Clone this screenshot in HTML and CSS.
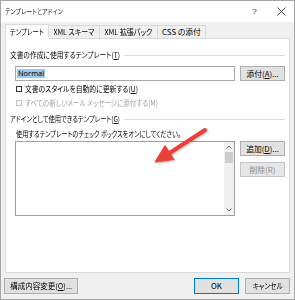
FILE: index.html
```html
<!DOCTYPE html>
<html lang="ja">
<head>
<meta charset="utf-8">
<title>テンプレートとアドイン</title>
<link rel="stylesheet" href="styles.css">
</head>
<body>
<div class="window">
  <div class="titlebar">
    <span class="title"><span class="sx s-title">テンプレートとアドイン</span></span>
    <span class="tb-btn help">?</span>
    <span class="tb-btn close">
      <svg width="9" height="9" viewBox="0 0 9 9"><path d="M0.5 0.5L8.5 8.5M8.5 0.5L0.5 8.5" stroke="#333" stroke-width="0.9" fill="none"/></svg>
    </span>
  </div>
  <div class="tabs">
    <div class="tab active t1"><span class="sx c s-tab1">テンプレート</span></div>
    <div class="tab t2"><span class="sx c s-tab2">XML スキーマ</span></div>
    <div class="tab t3"><span class="sx c s-tab3">XML 拡張パック</span></div>
    <div class="tab t4"><span class="sx c">CSS の添付</span></div>
  </div>
  <div class="panel">
    <div class="group-header"><span class="sx s-h1">文書の作成に使用するテンプレート(<u>T</u>)</span><span class="rule"></span></div>
    <div class="row input-row">
      <div class="textbox"><span class="sel">Normal</span></div>
      <button class="btn side">添付(<u>A</u>)...</button>
    </div>
    <div class="check"><span class="box"></span><span class="sx s-c1">文書のスタイルを自動的に更新する(<u>U</u>)</span></div>
    <div class="check disabled"><span class="box"></span><span class="sx s-c2">すべての新しいメール メッセージに添付する(M)</span></div>
    <div class="group-header second"><span class="sx s-h2">アドインとして使用できるテンプレート(<u>G</u>)</span><span class="rule"></span></div>
    <div class="hint"><span class="sx s-hint">使用するテンプレートのチェック ボックスをオンにしてください。</span></div>
    <div class="row list-row">
      <div class="listbox">
        <div class="list-area"></div>
        <div class="scrollbar">
          <span class="sb-arrow"><svg width="6" height="4" viewBox="0 0 6 4"><path d="M0.5 3.5L3 1L5.5 3.5" stroke="#606060" stroke-width="0.9" fill="none"/></svg></span>
          <span class="sb-thumb"></span>
          <span class="sb-track"></span>
          <span class="sb-arrow"><svg width="6" height="4" viewBox="0 0 6 4"><path d="M0.5 0.5L3 3L5.5 0.5" stroke="#606060" stroke-width="0.9" fill="none"/></svg></span>
        </div>
      </div>
      <div class="side-btns">
        <button class="btn side">追加(<u>D</u>)...</button>
        <button class="btn side" disabled>削除(R)</button>
      </div>
    </div>
  </div>
  <div class="footer">
    <button class="btn organizer"><span class="sx c s-b4">構成内容変更(<u>O</u>)...</span></button>
    <span class="spacer"></span>
    <button class="btn default">OK</button>
    <button class="btn cancel"><span class="sx c s-cancel">キャンセル</span></button>
  </div>
  <svg class="arrow" width="295" height="300" viewBox="0 0 295 300">
    <defs>
      <filter id="sh" x="-20%" y="-20%" width="140%" height="140%">
        <feDropShadow dx="0.8" dy="1" stdDeviation="0.8" flood-color="#000" flood-opacity="0.3"/>
      </filter>
    </defs>
    <g filter="url(#sh)" fill="#e8413a" stroke="#e8413a">
      <line x1="205" y1="130" x2="168" y2="154" stroke-width="4" stroke-linecap="round"/>
      <polygon points="155,162 165,145.5 174,159.5" stroke-width="1" stroke-linejoin="round"/>
    </g>
  </svg>
</div>
</body>
</html>
```

FILE: styles.css
```css
* { box-sizing: border-box; }

html, body {
  margin: 0;
  padding: 0;
  background: #ffffff;
}

body {
  font-family: "Noto Sans CJK JP", "Noto Sans", sans-serif;
  font-size: 7.8px;
  font-feature-settings: "palt";
  color: #000;
  line-height: 1;
}

/* horizontally condensed text (Meiryo UI has narrow kana) */
.sx {
  display: inline-block;
  white-space: nowrap;
  transform-origin: 0 50%;
}
.sx.c { transform-origin: 50% 50%; }

.s-title { transform: scaleX(0.854); }
.s-tab1 { transform: scaleX(0.82); }
.s-tab2 { transform: scaleX(0.895); }
.s-tab3 { transform: scaleX(0.907); }
.s-h1 { transform: scaleX(0.864); margin-right: -17px; }
.s-c1 { transform: scaleX(0.871); }
.s-c2 { transform: scaleX(0.839); }
.s-h2 { transform: scaleX(0.807); margin-right: -26px; }
.s-hint { transform: scaleX(0.793); }
.s-b4 { transform: scaleX(0.963); }
.s-cancel { transform: scaleX(0.85); }

.window {
  position: relative;
  width: 295px;
  height: 300px;
  border: 1px solid #a6a6a6;
  background: #f0f0f0;
  display: flex;
  flex-direction: column;
  overflow: hidden;
}

.titlebar {
  flex: none;
  height: 21px;
  background: #fff;
  display: flex;
  align-items: center;
  padding-left: 4px;
}

.title {
  flex: 1;
  font-size: 7px;
  color: #1a1a1a;
}

.tb-btn {
  display: flex;
  align-items: center;
  justify-content: center;
  height: 21px;
}

.help {
  width: 27px;
  font-family: "Liberation Sans", sans-serif;
  font-size: 8px;
  color: #333;
}

.close {
  width: 26px;
}

.tabs {
  flex: none;
  display: flex;
  align-items: flex-end;
  height: 15px;
  margin-top: 2px;
  margin-bottom: -1px;
  padding-left: 4px;
  position: relative;
  z-index: 1;
}

.tab {
  height: 14px;
  display: flex;
  align-items: center;
  justify-content: center;
  background: #f0f0f0;
  border: 1px solid #d9d9d9;
  margin-left: -1px;
  color: #000;
  white-space: nowrap;
}

.tab.active {
  height: 15px;
  background: #fff;
  border-bottom-color: #fff;
  margin-left: 0;
  position: relative;
  z-index: 2;
}

.t1 { width: 44px; }
.t2 { width: 52px; }
.t3 { width: 59px; }
.t4 { width: 49px; }

.panel {
  flex: none;
  height: 235px;
  margin: 0 4px;
  background: #fff;
  border: 1px solid #d9d9d9;
  padding: 11px 4px 0 4px;
  display: flex;
  flex-direction: column;
}

.group-header {
  height: 10px;
  display: flex;
  align-items: center;
  white-space: nowrap;
}

.group-header.second {
  margin-top: 6px;
}

.rule {
  flex: 1;
  height: 1px;
  background: #dcdcdc;
  margin-left: 4px;
}

.row {
  display: flex;
}

.input-row {
  margin-top: 6px;
  height: 15px;
}

.textbox {
  margin-left: 5px;
  width: 220px;
  height: 15px;
  border: 1px solid #a9a9a9;
  background: #fff;
  display: flex;
  align-items: center;
  padding-left: 1px;
}

.sel {
  background: #99c9ef;
  color: #000;
  font-family: "Noto Sans", sans-serif;
  font-size: 7.4px;
  line-height: 9px;
  padding: 0 1px;
}

.btn {
  font-family: inherit;
  font-size: 7.8px;
  font-feature-settings: "palt";
  color: #000;
  background: #e1e1e1;
  border: 1px solid #adadad;
  padding: 0;
  margin: 0;
  display: flex;
  align-items: center;
  justify-content: center;
  white-space: nowrap;
  line-height: 1;
}

.btn:disabled {
  background: #e6e6e6;
  border-color: #c4c4c4;
  color: #8c8c8c;
}

.side {
  width: 45px;
  height: 15px;
  margin-left: auto;
}

.check {
  display: flex;
  align-items: center;
  height: 10px;
  margin-top: 3px;
  padding-left: 6px;
  white-space: nowrap;
}

.check.disabled {
  margin-top: 4px;
  color: #a0a0a0;
}

.box {
  width: 6px;
  height: 6px;
  border: 1px solid #333;
  background: #fff;
  margin-right: 3px;
  flex: none;
}

.check.disabled .box {
  border-color: #c4c4c4;
}

.hint {
  margin-top: 5px;
  height: 10px;
  display: flex;
  align-items: center;
  padding-left: 6px;
  white-space: nowrap;
}

.list-row {
  margin-top: 2px;
  height: 75px;
}

.listbox {
  margin-left: 5px;
  width: 220px;
  height: 75px;
  border: 1px solid #a0a0a0;
  background: #fff;
  display: flex;
}

.list-area {
  flex: 1;
}

.scrollbar {
  width: 10px;
  background: #f0f0f0;
  display: flex;
  flex-direction: column;
  align-items: center;
}

.sb-arrow {
  height: 10px;
  display: flex;
  align-items: center;
  justify-content: center;
}

.sb-thumb {
  width: 8px;
  height: 11px;
  background: #cdcdcd;
  flex: none;
}

.sb-track {
  flex: 1;
}

.side-btns {
  margin-left: auto;
  display: flex;
  flex-direction: column;
  gap: 6px;
}

.footer {
  flex: none;
  display: flex;
  margin-top: 5px;
  padding: 0 4px 0 3px;
  gap: 6px;
}

.footer .btn {
  height: 16px;
}

.organizer {
  width: 74px;
}

.spacer {
  flex: 1;
}

.default {
  width: 45px;
  border-color: #0078d7;
}

.cancel {
  width: 45px;
}

.arrow {
  position: absolute;
  left: -1px;
  top: -1px;
  pointer-events: none;
  z-index: 5;
}
```
